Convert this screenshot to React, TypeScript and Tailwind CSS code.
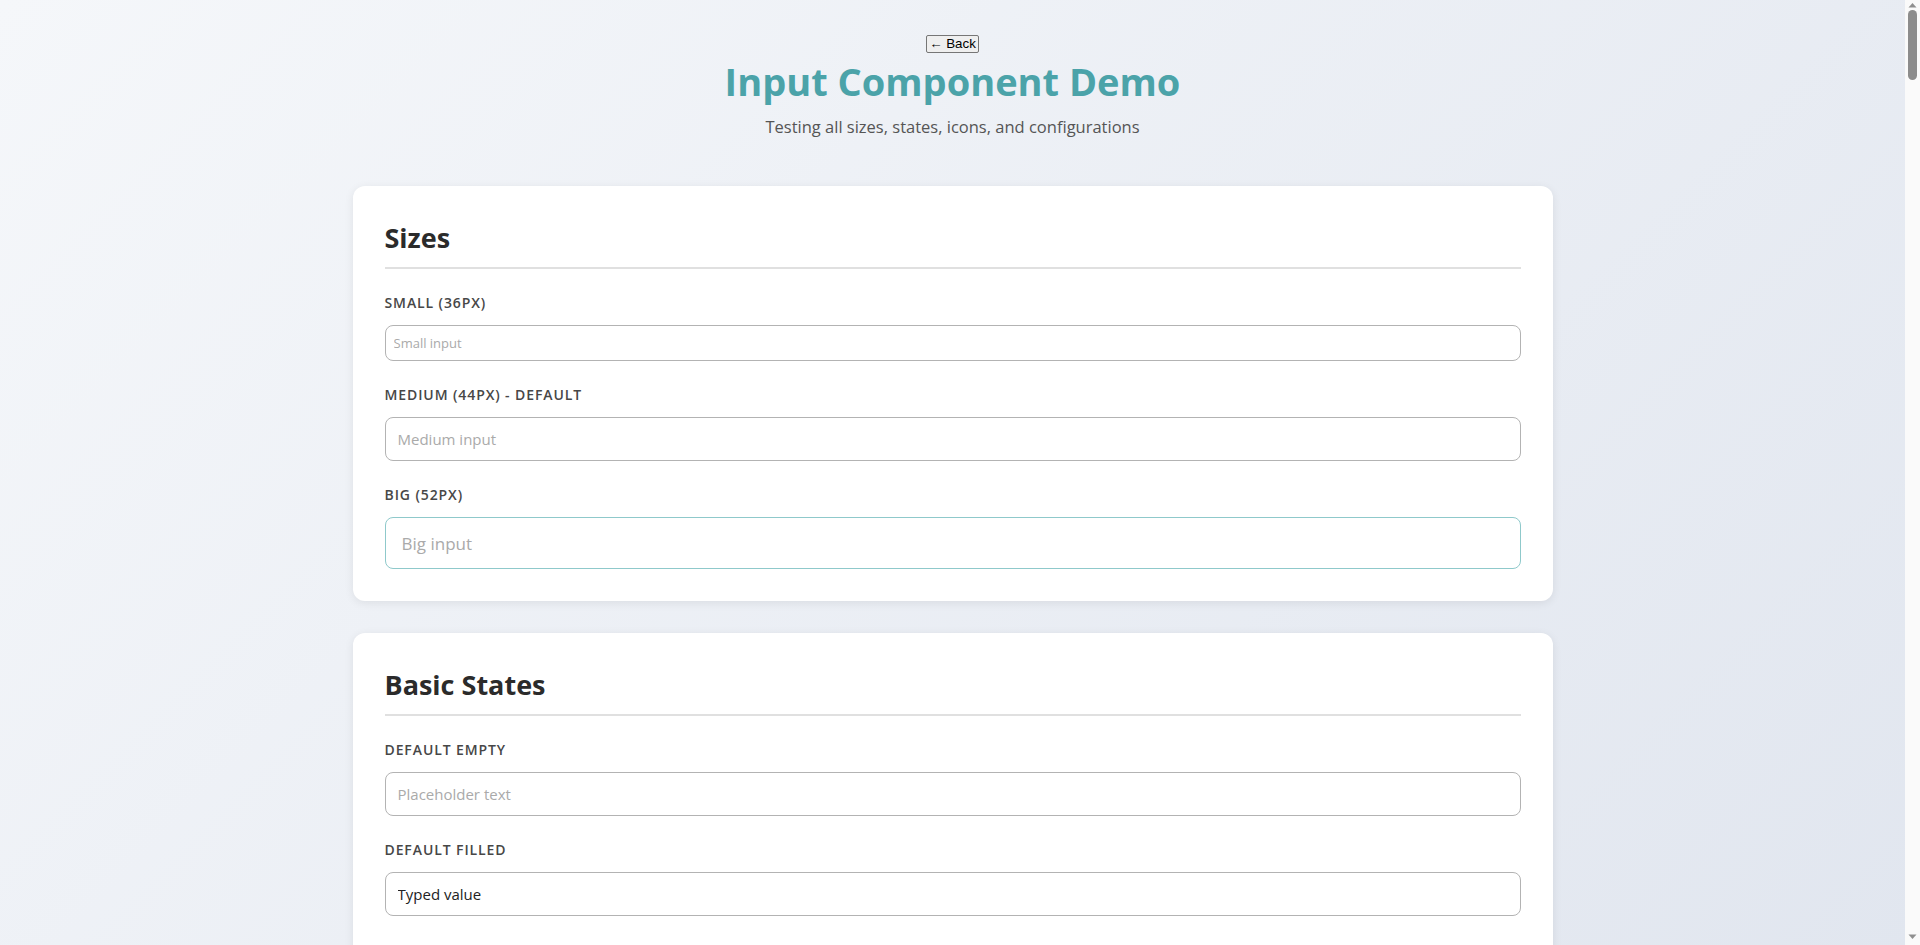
import React from "react";
import {
  Search,
  Mail,
  Lock,
  User,
  Eye,
  X,
  Phone,
  Globe,
  Calendar,
  DollarSign,
  Check,
  AlertCircle,
  AlertTriangle,
  Clock,
  MapPin,
  CreditCard,
} from "lucide-react";

type Size = "sm" | "md" | "lg";
type Variant = "default" | "focus" | "error" | "success" | "warning";

type Field = {
  label: string;
  placeholder?: string;
  value?: string;
  size?: Size;
  variant?: Variant;
  disabled?: boolean;
  readOnly?: boolean;
  left?: React.ReactNode;
  right?: React.ReactNode;
  helper?: string;
  type?: string;
  prefix?: string;
  suffix?: string;
  width?: string;
};

type Section = { title: string; fields: Field[] };

const sizeCls: Record<Size, string> = {
  sm: "h-[36px] text-[13px] rounded-[8px]",
  md: "h-[44px] text-[15px] rounded-[8px]",
  lg: "h-[52px] text-[17px] rounded-[8px]",
};
const padL: Record<Size, string> = { sm: "pl-[8px]", md: "pl-[12px]", lg: "pl-[16px]" };
const padR: Record<Size, string> = { sm: "pr-[8px]", md: "pr-[12px]", lg: "pr-[16px]" };
const padLIcon: Record<Size, string> = { sm: "pl-[32px]", md: "pl-[40px]", lg: "pl-[46px]" };
const padRIcon: Record<Size, string> = { sm: "pr-[32px]", md: "pr-[40px]", lg: "pr-[46px]" };
const iconSize: Record<Size, number> = { sm: 14, md: 18, lg: 20 };
const iconLeftPos: Record<Size, string> = { sm: "left-[10px]", md: "left-[13px]", lg: "left-[16px]" };
const iconRightPos: Record<Size, string> = { sm: "right-[10px]", md: "right-[13px]", lg: "right-[16px]" };
const addonH: Record<Size, string> = { sm: "h-[36px]", md: "h-[44px]", lg: "h-[52px]" };

const borderCls: Record<Variant, string> = {
  default: "border-[#b3b3b3]",
  focus: "border-[#8fc9cb]",
  error: "border-[#e05252]",
  success: "border-[#3fa66b]",
  warning: "border-[#e0a030]",
};
const helperCls: Record<Variant, string> = {
  default: "text-[#777]",
  focus: "text-[#777]",
  error: "text-[#d64545]",
  success: "text-[#2f9160]",
  warning: "text-[#c98a1c]",
};

const sections: Section[] = [
  {
    title: "Sizes",
    fields: [
      { label: "Small (36px)", placeholder: "Small input", size: "sm" },
      { label: "Medium (44px) - Default", placeholder: "Medium input" },
      { label: "Big (52px)", placeholder: "Big input", size: "lg", variant: "focus" },
    ],
  },
  {
    title: "Basic States",
    fields: [
      { label: "Default Empty", placeholder: "Placeholder text" },
      { label: "Default Filled", value: "Typed value" },
      { label: "Focused", placeholder: "Focused input", variant: "focus" },
      { label: "Disabled Empty", placeholder: "Disabled input", disabled: true },
      { label: "Disabled Filled", value: "Disabled value", disabled: true },
      { label: "Read Only", value: "Read only value", readOnly: true },
      { label: "Required", placeholder: "Required field", helper: "This field is required" },
    ],
  },
  {
    title: "Validation States",
    fields: [
      { label: "Error", value: "Invalid value", variant: "error" },
      { label: "Error With Message", value: "wrong@", variant: "error", helper: "Please enter a valid email address", right: <AlertCircle /> },
      { label: "Success", value: "Valid value", variant: "success" },
      { label: "Success With Message", value: "john.doe@example.com", variant: "success", helper: "Email address is available", right: <Check /> },
      { label: "Warning", value: "Weak password", variant: "warning" },
      { label: "Warning With Message", value: "password123", variant: "warning", helper: "This password is commonly used", right: <AlertTriangle /> },
      { label: "Error Empty", placeholder: "Required", variant: "error", helper: "This field cannot be empty" },
    ],
  },
  {
    title: "Icons",
    fields: [
      { label: "Left Icon", placeholder: "Search...", left: <Search /> },
      { label: "Right Icon", placeholder: "Email address", right: <Mail /> },
      { label: "Both Icons", placeholder: "Username", left: <User />, right: <Check /> },
      { label: "Clearable", value: "Clear me", right: <X /> },
      { label: "Password Toggle", value: "secretpassword", type: "password", left: <Lock />, right: <Eye /> },
      { label: "Phone", placeholder: "+1 (555) 000-0000", left: <Phone /> },
      { label: "Website", placeholder: "https://example.com", left: <Globe /> },
      { label: "Location", placeholder: "Enter a location", left: <MapPin /> },
    ],
  },
  {
    title: "Sizes With Icons",
    fields: [
      { label: "Small Left Icon", placeholder: "Search", size: "sm", left: <Search /> },
      { label: "Medium Left Icon", placeholder: "Search", left: <Search /> },
      { label: "Big Left Icon", placeholder: "Search", size: "lg", left: <Search /> },
      { label: "Small Right Icon", placeholder: "Date", size: "sm", right: <Calendar /> },
      { label: "Medium Right Icon", placeholder: "Date", right: <Calendar /> },
      { label: "Big Right Icon", placeholder: "Date", size: "lg", right: <Calendar /> },
      { label: "Small Both Icons", placeholder: "Time", size: "sm", left: <Clock />, right: <X /> },
      { label: "Big Both Icons", placeholder: "Time", size: "lg", left: <Clock />, right: <X /> },
    ],
  },
  {
    title: "Input Types",
    fields: [
      { label: "Text", placeholder: "Plain text", type: "text" },
      { label: "Email", placeholder: "name@example.com", type: "email" },
      { label: "Password", value: "password", type: "password" },
      { label: "Number", placeholder: "0", type: "text" },
      { label: "Telephone", placeholder: "555-0100", type: "tel" },
      { label: "URL", placeholder: "https://", type: "url" },
      { label: "Search", placeholder: "Search anything", type: "search" },
      { label: "Date", placeholder: "mm/dd/yyyy", type: "text" },
      { label: "Time", placeholder: "--:-- --", type: "text" },
    ],
  },
  {
    title: "Helper Text",
    fields: [
      { label: "With Helper", placeholder: "Your name", helper: "Enter your full legal name" },
      { label: "Small With Helper", placeholder: "Nickname", size: "sm", helper: "Optional" },
      { label: "Big With Helper", placeholder: "Company", size: "lg", helper: "Where do you work?" },
      { label: "Helper And Icon", placeholder: "Email", left: <Mail />, helper: "We never share your email" },
      { label: "Long Helper", placeholder: "Bio", helper: "Write a short description about yourself. This will be visible on your public profile page." },
      { label: "Disabled With Helper", placeholder: "Locked", disabled: true, helper: "This field cannot be edited" },
    ],
  },
  {
    title: "Character Counter",
    fields: [
      { label: "Counter Empty", placeholder: "Max 50 characters", helper: "0 / 50" },
      { label: "Counter Filled", value: "Hello world", helper: "11 / 50" },
      { label: "Counter Near Limit", value: "This text is getting very close to the limit now", variant: "warning", helper: "48 / 50" },
      { label: "Counter Exceeded", value: "This text has gone well beyond the allowed maximum", variant: "error", helper: "52 / 50" },
      { label: "Counter Small", placeholder: "Short", size: "sm", helper: "0 / 20" },
      { label: "Counter Big", placeholder: "Long", size: "lg", helper: "0 / 200" },
    ],
  },
  {
    title: "Prefix & Suffix",
    fields: [
      { label: "Price", placeholder: "0.00", left: <DollarSign /> },
      { label: "Percentage", placeholder: "0", suffix: "%" },
      { label: "Weight", placeholder: "0", suffix: "kg" },
      { label: "Domain", placeholder: "mysite", prefix: "https://", suffix: ".com" },
      { label: "Card Number", placeholder: "0000 0000 0000 0000", left: <CreditCard /> },
      { label: "Amount", value: "1,250.00", prefix: "USD" },
    ],
  },
  {
    title: "Widths",
    fields: [
      { label: "Full Width", placeholder: "100%" },
      { label: "Three Quarters", placeholder: "75%", width: "w-3/4" },
      { label: "Half Width", placeholder: "50%", width: "w-1/2" },
      { label: "Quarter Width", placeholder: "25%", width: "w-1/4" },
      { label: "Fixed 320px", placeholder: "320px", width: "w-[320px]" },
      { label: "Fixed 200px", placeholder: "200px", width: "w-[200px]" },
    ],
  },
  {
    title: "Focus States",
    fields: [
      { label: "Small Focused", placeholder: "Small focused", size: "sm", variant: "focus" },
      { label: "Medium Focused", placeholder: "Medium focused", variant: "focus" },
      { label: "Big Focused", placeholder: "Big focused", size: "lg", variant: "focus" },
      { label: "Focused Filled", value: "Focused value", variant: "focus" },
      { label: "Focused With Icon", placeholder: "Search", variant: "focus", left: <Search /> },
      { label: "Focused Error", value: "Bad value", variant: "error", helper: "Fix this value" },
    ],
  },
  {
    title: "Disabled Variants",
    fields: [
      { label: "Disabled Small", placeholder: "Disabled", size: "sm", disabled: true },
      { label: "Disabled Medium", placeholder: "Disabled", disabled: true },
      { label: "Disabled Big", placeholder: "Disabled", size: "lg", disabled: true },
      { label: "Disabled With Icon", placeholder: "Disabled", disabled: true, left: <Lock /> },
      { label: "Disabled Error", value: "Disabled error", disabled: true, variant: "error" },
      { label: "Disabled Success", value: "Disabled success", disabled: true, variant: "success" },
    ],
  },
  {
    title: "Long Content",
    fields: [
      { label: "Long Placeholder", placeholder: "This is a very long placeholder text that demonstrates how the input handles overflow of content that exceeds the width" },
      { label: "Long Value", value: "Lorem ipsum dolor sit amet, consectetur adipiscing elit, sed do eiusmod tempor incididunt ut labore et dolore magna aliqua. Ut enim ad minim veniam" },
      { label: "Long Value With Icons", value: "Lorem ipsum dolor sit amet, consectetur adipiscing elit, sed do eiusmod tempor incididunt ut labore et dolore magna", left: <Search />, right: <X /> },
      { label: "Unicode", value: "Ünïcödé — 日本語 — 中文 — 한국어" },
      { label: "Emoji Placeholder", placeholder: "Type something :)" },
    ],
  },
  {
    title: "Combined Configurations",
    fields: [
      { label: "Small Error Icon", value: "bad", size: "sm", variant: "error", left: <AlertCircle />, helper: "Invalid" },
      { label: "Big Success Icon", value: "good", size: "lg", variant: "success", right: <Check />, helper: "Looks good" },
      { label: "Warning Both Icons", value: "hmm", variant: "warning", left: <AlertTriangle />, right: <X />, helper: "Please double check" },
      { label: "Read Only With Icon", value: "Read only", readOnly: true, left: <Lock /> },
      { label: "Half Width Error", value: "oops", variant: "error", width: "w-1/2", helper: "Something went wrong" },
      { label: "Quarter Width Small", placeholder: "Tiny", size: "sm", width: "w-1/4" },
      { label: "Big Password", value: "password", type: "password", size: "lg", left: <Lock />, right: <Eye /> },
    ],
  },
];

function Icon({ node, size }: { node: React.ReactNode; size: Size }) {
  if (!React.isValidElement(node)) return null;
  return React.cloneElement(node as React.ReactElement<{ size?: number; strokeWidth?: number }>, {
    size: iconSize[size],
    strokeWidth: 2,
  });
}

function FieldRow({ f }: { f: Field }) {
  const size = f.size ?? "md";
  const variant = f.variant ?? "default";
  const disabled = !!f.disabled;
  return (
    <div className="mb-[24px] last:mb-0">
      <label className="block mb-[12px] text-[14px] leading-[20px] font-semibold uppercase tracking-[0.9px] text-[#474747]">
        {f.label}
      </label>
      <div className={`relative flex items-center ${f.width ?? "w-full"}`}>
        {f.prefix && (
          <span className={`flex items-center px-[12px] border border-r-0 ${borderCls[variant]} bg-[#f3f4f6] text-[#666] text-[14px] rounded-l-[8px] ${addonH[size]}`}>
            {f.prefix}
          </span>
        )}
        <input
          type={f.type ?? "text"}
          placeholder={f.placeholder}
          defaultValue={f.value}
          disabled={disabled}
          readOnly={f.readOnly}
          className={`block w-full border outline-none ${sizeCls[size]} ${borderCls[variant]} ${f.left ? padLIcon[size] : padL[size]} ${f.right ? padRIcon[size] : padR[size]} ${disabled ? "bg-[#f2f2f2] text-[#999] cursor-not-allowed" : f.readOnly ? "bg-[#fafafa] text-[#222]" : "bg-white text-[#222]"} placeholder:text-[#aaaaaa] ${f.prefix ? "rounded-l-none" : ""} ${f.suffix ? "rounded-r-none" : ""}`}
        />
        {f.suffix && (
          <span className={`flex items-center px-[12px] border border-l-0 ${borderCls[variant]} bg-[#f3f4f6] text-[#666] text-[14px] rounded-r-[8px] ${addonH[size]}`}>
            {f.suffix}
          </span>
        )}
        {f.left && (
          <span className={`absolute top-1/2 -translate-y-1/2 ${iconLeftPos[size]} text-[#888] flex`}>
            <Icon node={f.left} size={size} />
          </span>
        )}
        {f.right && (
          <span className={`absolute top-1/2 -translate-y-1/2 ${iconRightPos[size]} text-[#888] flex`}>
            <Icon node={f.right} size={size} />
          </span>
        )}
      </div>
      {f.helper && <p className={`mt-[6px] text-[13px] leading-[18px] ${helperCls[variant]}`}>{f.helper}</p>}
    </div>
  );
}

function Card({ s }: { s: Section }) {
  return (
    <section className="bg-white rounded-[12px] p-[32px] shadow-[0_2px_10px_rgba(0,0,0,0.08)]">
      <h2 className="text-[27px] leading-[36px] pt-[2px] font-bold text-[#2b2b2b] pb-[11px] border-b-2 border-[#e0e0e0] mb-[24px]">
        {s.title}
      </h2>
      {s.fields.map((f, i) => (
        <FieldRow key={i} f={f} />
      ))}
    </section>
  );
}

function Scrollbar() {
  return (
    <div className="w-[15px] h-screen shrink-0 bg-[#fafafa] flex flex-col items-center">
      <svg width="15" height="9" viewBox="0 0 15 9" className="shrink-0">
        <path d="M3.5 7.5 L7.5 3 L11.5 7.5 Z" fill="#8f8f8f" />
      </svg>
      <div className="w-[9px] h-[70px] mt-[1px] rounded-[5px] bg-[#8c8c8c] shrink-0" />
      <div className="flex-1" />
      <svg width="15" height="13" viewBox="0 0 15 13" className="shrink-0">
        <path d="M3.5 2.5 L11.5 2.5 L7.5 7 Z" fill="#8f8f8f" />
      </svg>
    </div>
  );
}

export default function App() {
  return (
    <div className="h-screen flex bg-[linear-gradient(135deg,#f5f7fa_0%,#e1e6ef_100%)] font-['Open_Sans','Noto_Sans',sans-serif] text-[#222]">
      <main className="flex-1 h-screen overflow-y-auto">
        <div className="max-w-[1200px] mx-auto pt-[35px] pb-[48px]">
          <header className="flex flex-col items-center text-center mb-[47px]">
            <button className="h-[18px] px-[2px] border border-[#767676] rounded-[2px] bg-[#efefef] text-black text-[13.33px] leading-[16px] font-['Liberation_Sans',Arial,sans-serif]">
              ← Back
            </button>
            <h1 className="mt-[4px] text-[38px] leading-[48px] font-bold text-[#4ba3a9]">Input Component Demo</h1>
            <p className="mt-[10px] text-[16.5px] leading-[24px] text-[#555]">
              Testing all sizes, states, icons, and configurations
            </p>
          </header>
          <div className="flex flex-col gap-[32px]">
            {sections.map((s, i) => (
              <Card key={i} s={s} />
            ))}
          </div>
        </div>
      </main>
      <Scrollbar />
    </div>
  );
}
